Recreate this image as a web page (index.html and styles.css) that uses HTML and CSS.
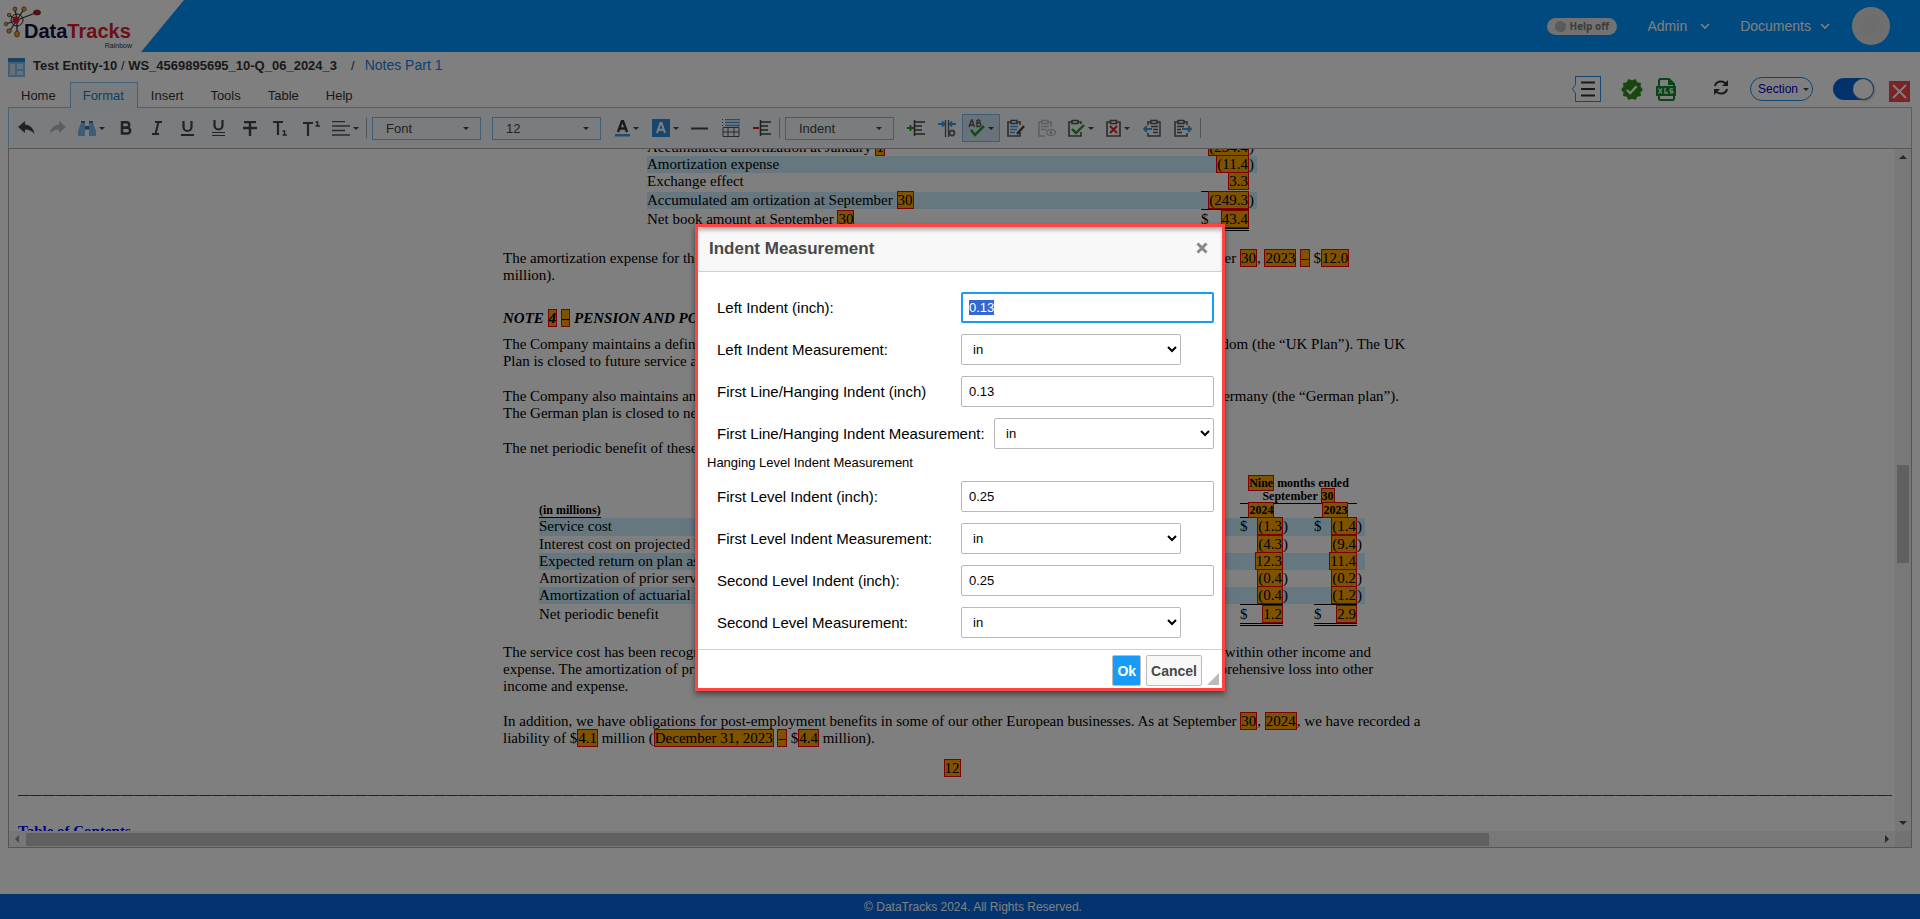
FILE: index.html
```html
<!DOCTYPE html>
<html lang="en">
<head>
    <meta charset="UTF-8">
    <meta name="viewport" content="width=device-width, initial-scale=1.0">
    <title>DataTracks Rainbow</title>
    <link rel="stylesheet" href="styles.css">
    <script src="script.js" defer></script>
</head>
<body>
    <header class="top-bar">
        <div class="logo">
            <svg class="logo-mark" width="40" height="34" viewBox="0 0 40 34">
                <g stroke="#333" stroke-width="1" fill="none">
                    <circle cx="14" cy="15" r="6"/>
                    <path d="M14 15L12 4M14 15L21 4M14 15L6 10M14 15L3 19M14 15L6 27M14 15L14 29M14 15L35 7" stroke-width="1.3"/>
                </g>
                <g fill="#e8a33c" stroke="#5a3a10" stroke-width=".7">
                    <circle cx="12" cy="4" r="2"/><circle cx="21" cy="4" r="2.2"/><circle cx="6" cy="10" r="1.7"/>
                    <circle cx="3" cy="19" r="1.8"/><circle cx="6" cy="26" r="2.2"/><ellipse cx="14" cy="29" rx="2.4" ry="3"/>
                </g>
                <circle cx="13" cy="15" r="3.4" fill="#e0202a"/>
                <ellipse cx="34" cy="7.500" rx="3.600" ry="2.600" fill="#c8102e" stroke="#333" stroke-width=".6"/>
            </svg>
            <div class="logo-text"><span class="logo-data">Data</span><span class="logo-tracks">Tracks</span></div>
            <div class="logo-sub">Rainbow</div>
        </div>
        <nav class="top-nav">
            <button class="help-btn"><span class="dot"></span>Help off</button>
            <button class="nav-btn nav-admin">Admin <svg width="10" height="7" viewBox="0 0 10 7"><path d="M1 1l4 4 4-4" fill="none" stroke="#fff" stroke-width="1.600"/></svg></button>
            <button class="nav-btn">Documents <svg width="10" height="7" viewBox="0 0 10 7"><path d="M1 1l4 4 4-4" fill="none" stroke="#fff" stroke-width="1.600"/></svg></button>
            <span class="avatar"></span>
        </nav>
    </header>

    <div class="sub-bar">
        <div class="sub-left">
            <div class="breadcrumb">
                <svg width="17" height="19" viewBox="0 0 17 19"><path d="M0 0h17v19H0z" fill="#86bfe6"/><path d="M0 0h17v4H0z" fill="#2e86c8"/><path d="M2 6h5v11H2zM9 6h6v5H9zM9 13h6v4H9z" fill="#c9e3f5"/></svg>
                <span class="crumb-main"><b>Test Entity-10</b> / <b>WS_4569895695_10-Q_06_2024_3</b></span>
                <span class="crumb-sep">/</span>
                <a href="#" class="crumb-link">Notes Part 1</a>
            </div>
            <div class="tabs">
                <button class="tab">Home</button>
                <button class="tab active">Format</button>
                <button class="tab">Insert</button>
                <button class="tab">Tools</button>
                <button class="tab">Table</button>
                <button class="tab">Help</button>
            </div>
        </div>
        <div class="sub-right">
            <button class="act act-outline" aria-label="Outline"><svg width="29" height="26" viewBox="0 0 29 26"><path d="M3.500 .5h25v25h-25v-8l-3-4.500 3-4.500z" fill="none" stroke="#2b8fe0"/><path d="M9 6.500h14M9 13h14M9 19.500h14" stroke="#333" stroke-width="2"/></svg></button>
            <button class="act act-valid" aria-label="Validate"><svg width="22" height="23" viewBox="0 0 24 24"><path d="M23 12l-2.400-2.800.3-3.700-3.600-.8-1.900-3.200L12 3 8.600 1.500 6.700 4.700l-3.600.8.3 3.700L1 12l2.400 2.800-.3 3.700 3.600.8 1.900 3.200L12 21l3.400 1.500 1.900-3.200 3.600-.8-.3-3.700z" fill="#2f8f1f" stroke="#2f8f1f" stroke-width="1.500"/><path d="M6.500 12.500l3.500 3.500 7-7.500" fill="none" stroke="#fff" stroke-width="2.400"/></svg></button>
            <button class="act act-xls" aria-label="Export XLS"><svg width="20" height="23" viewBox="0 0 20 23"><path d="M3 9V2.500Q3 1 4.500 1H13l5 5v3M3 17v3.500Q3 22 4.500 22h12q1.500 0 1.500-1.500V17" fill="none" stroke="#128a2c" stroke-width="2"/><path d="M12 1l6 6h-6zM0 8h20v10H0z" fill="#128a2c"/><path d="M2.500 10.500l3.500 5M6 10.500l-3.500 5M9 10v5h3M17 11q-3-1-3 1t1.500 1q1.500 0 1.500 1t-3 1" fill="none" stroke="#fff" stroke-width="1.300"/></svg></button>
            <button class="act act-refresh" aria-label="Refresh"><svg width="16" height="15" viewBox="0 0 16 15"><path d="M2 6a6 5.500 0 0 1 11-2M14 9a6 5.500 0 0 1-11 2" fill="none" stroke="#333" stroke-width="2"/><path d="M15 0v6H9zM1 15V9h6z" fill="#333"/></svg></button>
            <button class="section-btn">Section <i class="caret"></i></button>
            <input type="checkbox" class="switch" aria-label="Edit mode" checked>
            <button class="close-doc" aria-label="Close document"><svg width="21" height="21" viewBox="0 0 21 21"><path d="M4 4l13 13M17 4L4 17" stroke="#fff" stroke-width="1.800"/></svg></button>
        </div>
    </div>

    <main class="editor">
        <div class="toolbar">
            <button class="tool" aria-label="Undo"><svg width="17" height="14" viewBox="0 0 17 14"><path d="M0 6l7-6v3.500Q15 4 16.500 13 13 8.500 7 8.500V12z" fill="#444"/></svg></button>
            <button class="tool" aria-label="Redo"><svg width="17" height="14" viewBox="0 0 17 14"><path d="M17 6l-7-6v3.500Q2 4 .5 13 4 8.500 10 8.500V12z" fill="#bbb"/></svg></button>
            <button class="tool wide" aria-label="Find"><svg width="18" height="15" viewBox="0 0 18 15"><path d="M3 2h4v3h4V2h4l3 8v5h-7V9H7v6H0v-5z" fill="#7db9e8"/><path d="M3 0h4v2H3zM11 0h4v2h-4z" fill="#2779b8"/><path d="M7 5h4v3H7z" fill="#2779b8"/></svg><i class="caret"></i></button>
            <button class="tool" aria-label="Bold"><svg width="12" height="14" viewBox="0 0 12 14"><path d="M2 1.300h4.500a2.600 2.600 0 0 1 0 5.300H2zM2 6.700h5.300a2.900 2.900 0 0 1 0 5.800H2z" fill="none" stroke="#444" stroke-width="2.500"/></svg></button>
            <button class="tool" aria-label="Italic"><svg width="10" height="14" viewBox="0 0 10 14"><path d="M3 1h7M0 13h7M6.500 1l-3 12" fill="none" stroke="#444" stroke-width="2"/></svg></button>
            <button class="tool" aria-label="Underline"><svg width="13" height="15" viewBox="0 0 13 15"><path d="M2.500 0v6a4 4 0 0 0 8 0V0M0 14h13" fill="none" stroke="#444" stroke-width="2.200"/></svg></button>
            <button class="tool" aria-label="Double underline"><svg width="13" height="16" viewBox="0 0 13 16"><path d="M2.500 0v5.500a4 4 0 0 0 8 0V0" fill="none" stroke="#444" stroke-width="2.200"/><path d="M0 12.500h13M0 15.500h13" stroke="#444"/></svg></button>
            <button class="tool" aria-label="Strikethrough"><svg width="14" height="15" viewBox="0 0 14 15"><path d="M1 1h12M7 1v14M0 7h14" fill="none" stroke="#444" stroke-width="2.400"/></svg></button>
            <button class="tool" aria-label="Subscript"><svg width="15" height="15" viewBox="0 0 15 15"><path d="M0 1h10M5 1v13" fill="none" stroke="#444" stroke-width="2.200"/><path d="M9.500 10h2v4M9.500 14h4.500" fill="none" stroke="#444" stroke-width="1.500"/></svg></button>
            <button class="tool" aria-label="Superscript"><svg width="17" height="15" viewBox="0 0 17 15"><path d="M0 2h10M5 2v13" fill="none" stroke="#444" stroke-width="2.200"/><path d="M12.500 1h2v4M12.500 5h4.500" fill="none" stroke="#444" stroke-width="1.500"/></svg></button>
            <button class="tool wide" aria-label="Align"><svg width="18" height="15" viewBox="0 0 18 15"><path d="M0 .5h13M0 5h18M0 9.500h13M0 14h18" stroke="#555" stroke-width="1.500"/></svg><i class="caret"></i></button>
            <span class="sep"></span>
            <span class="combo"><select aria-label="Font"><option>Font</option></select></span>
            <span class="combo combo-size"><select aria-label="Font size"><option>12</option></select></span>
            <button class="tool wide" aria-label="Text colour"><svg width="15" height="17" viewBox="0 0 15 17"><path d="M3 12L7 1h1l4 11M4.500 8.500h6" fill="none" stroke="#333" stroke-width="2.400"/><path d="M0 14h15v2.500H0z" fill="#3c9be8"/></svg><i class="caret"></i></button>
            <button class="tool wide tool-gap" aria-label="Background colour"><svg width="18" height="18" viewBox="0 0 18 18"><path d="M0 0h18v18H0z" fill="#2f8fdf"/><path d="M5 14L8.500 4h1L13 14M6 10.800h6" fill="none" stroke="#fff" stroke-width="2"/></svg><i class="caret"></i></button>
            <button class="tool" aria-label="Line"><svg width="17" height="3" viewBox="0 0 17 3"><path d="M0 1.500h17" stroke="#444" stroke-width="2"/></svg></button>
            <button class="tool" aria-label="Table rows"><svg width="18" height="18" viewBox="0 0 18 18"><path d="M3 .5h15M3 3.500h15M3 6.500h15" stroke="#4a9fe0" stroke-width="1.500"/><path d="M.5 0v8" stroke="#555" stroke-dasharray="1 2"/><path d="M1 8.500h16v9H1zM1 13h16M6 8v9M12 8v9" fill="none" stroke="#555"/></svg></button>
            <button class="tool" aria-label="Remove indent"><svg width="18" height="16" viewBox="0 0 18 16"><path d="M0 8h6" stroke="#e01010" stroke-width="2"/><path d="M7.500 0v16M8 2h10M8 6h7M8 10h7M8 14h10" stroke="#444" stroke-width="1.600"/></svg></button>
            <span class="sep"></span>
            <span class="combo"><select aria-label="Indent"><option>Indent</option></select></span>
            <button class="tool" aria-label="Add indent"><svg width="18" height="16" viewBox="0 0 18 16"><path d="M0 8h7M3.500 5v6" stroke="#12a012" stroke-width="2"/><path d="M7.500 0v16M8 2h10M8 6h7M8 10h7M8 14h10" stroke="#444" stroke-width="1.600"/></svg></button>
            <button class="tool" aria-label="Indent settings"><svg width="18" height="17" viewBox="0 0 18 17"><path d="M0 4h6M18 4h-6M4 1.500L6.500 4 4 6.500M14 1.500L11.500 4 14 6.500" fill="none" stroke="#3c9be8" stroke-width="1.800"/><path d="M7.500 0v17M10.500 0v17" stroke="#555" stroke-width="1.300"/><circle cx="14" cy="13" r="2.500" fill="none" stroke="#666" stroke-width="1.800"/></svg></button>
            <button class="tool tool-on" aria-label="Spell check"><svg width="17" height="18" viewBox="0 0 17 18"><path d="M1 8l2.500-7h.5l2.500 7M2 6h4M9 1v6.500h2a1.500 1.500 0 0 0 0-3.500H9h1.500a1.500 1.500 0 0 0 0-3H9" fill="none" stroke="#555" stroke-width="1.400"/><path d="M3 11l4 5 9-9" fill="none" stroke="#1f9a1f" stroke-width="2.500"/></svg><i class="caret"></i></button>
            <button class="tool" aria-label="Edit notes"><svg width="18" height="18" viewBox="0 0 18 18"><path d="M4 3H1v14h12v-4M10 3h3v3M4 1.500h6v3H4z" fill="none" stroke="#555" stroke-width="1.600"/><path d="M3 7.500h8M3 10.500h7M3 13.500h5" stroke="#3c9be8" stroke-width="1.400"/><path d="M17 7l-7 8" stroke="#444" stroke-width="2.400"/></svg></button>
            <button class="tool" aria-label="View notes"><svg width="18" height="18" viewBox="0 0 18 18"><g opacity=".35"><path d="M4 3H1v14h6M10 3h3v5M4 1.500h6v3H4z" fill="none" stroke="#555" stroke-width="1.600"/><path d="M3 7.500h8M3 10.500h5" stroke="#555" stroke-width="1.400"/><ellipse cx="13" cy="13.500" rx="4.500" ry="3" fill="none" stroke="#555" stroke-width="1.500"/><circle cx="13" cy="13.500" r="1.200"/></g></svg></button>
            <button class="tool wide" aria-label="Accept"><svg width="17" height="18" viewBox="0 0 17 18"><path d="M4 3H1v14h12v-4M10 3h3v2M4 1.500h6v3H4z" fill="none" stroke="#555" stroke-width="1.600"/><path d="M4 10l4 4 8-8" fill="none" stroke="#1f9a1f" stroke-width="2.400"/></svg><i class="caret"></i></button>
            <button class="tool wide" aria-label="Reject"><svg width="15" height="18" viewBox="0 0 15 18"><path d="M4 3H1v14h13V3h-3M4.500 1.500h6v3h-6z" fill="none" stroke="#555" stroke-width="1.600"/><path d="M4 7l7 7M11 7l-7 7" stroke="#e02020" stroke-width="2"/></svg><i class="caret"></i></button>
            <button class="tool" aria-label="Previous note"><svg width="18" height="18" viewBox="0 0 18 18"><path d="M8 3H5v3M5 14v3h12V3h-3M8 1.500h6v3H8zM8 7.500h7M10 10.500h5M10 13.500h5" fill="none" stroke="#555" stroke-width="1.500"/><path d="M9 10H1M4 7l-3 3 3 3" fill="none" stroke="#3c9be8" stroke-width="1.800"/></svg></button>
            <button class="tool" aria-label="Next note"><svg width="18" height="18" viewBox="0 0 18 18"><path d="M4 3H1v14h12v-3M10 3h3v3M4 1.500h6v3H4zM3 7.500h7M3 10.500h4M3 13.500h5" fill="none" stroke="#555" stroke-width="1.500"/><path d="M8 10h9M14 7l3 3-3 3" fill="none" stroke="#3c9be8" stroke-width="1.800"/></svg></button>
            <span class="sep"></span>
        </div>

        <div class="doc-frame">
            <div class="doc">
                <div class="page">
                    <table class="fin fin-small">
                        <colgroup><col><col class="c-cur"><col class="c-val"><col class="c-end"></colgroup>
                        <tr><td>Accumulated amortization at January <mark>1</mark></td><td class="num" colspan="2"><mark>(234.4</mark></td><td>)</td></tr>
                        <tr class="band"><td>Amortization expense</td><td class="num" colspan="2"><mark>(11.4</mark></td><td>)</td></tr>
                        <tr class="tall"><td>Exchange effect</td><td class="num line" colspan="2"><mark>3.3</mark></td><td></td></tr>
                        <tr class="band"><td>Accumulated am ortization at September <mark>30</mark></td><td class="num" colspan="2"><mark>(249.3</mark></td><td>)</td></tr>
                        <tr class="total"><td>Net book amount at September <mark>30</mark></td><td class="over">$</td><td class="num over"><mark>43.4</mark></td><td></td></tr>
                    </table>

                    <p class="after-table">The amortization expense for the nine months ended September <mark>30</mark>, <mark>2024</mark> is $<mark>11.4</mark> million (nine months ended September <mark>30</mark>, <mark>2023</mark> <mark>–</mark> $<mark>12.0</mark> million).</p>
                    <h2>NOTE <mark>4</mark> <mark>–</mark> PENSION AND POST-EMPLOYMENT BENEFITS</h2>
                    <p>The Company maintains a defined benefit pension plan covering both current and former employees in the United Kingdom (the “UK Plan”). The UK Plan is closed to future service accrual.</p>
                    <p>The Company also maintains an unfunded defined benefit pension plan covering the current and former employees in Germany (the “German plan”). The German plan is closed to new entrants.</p>
                    <p>The net periodic benefit of these plans is shown in the following table:</p>

                    <table class="fin fin-wide">
                        <colgroup><col><col class="c-cur"><col class="c-val"><col class="c-gap"><col class="c-cur"><col class="c-val"><col class="c-end"></colgroup>
                        <tr class="head"><th></th><th colspan="5" class="line"><mark>Nine</mark> months ended<br>September <mark>30</mark></th><th></th></tr>
                        <tr class="head years"><th class="unit"><span>(in millions)</span></th><th colspan="2" class="line"><mark>2024</mark></th><th></th><th colspan="2" class="line"><mark>2023</mark></th><th></th></tr>
                        <tr class="band first"><td>Service cost</td><td>$</td><td class="num"><mark>(1.3</mark></td><td>)</td><td>$</td><td class="num"><mark>(1.4</mark></td><td>)</td></tr>
                        <tr><td>Interest cost on projected benefit obligation</td><td></td><td class="num"><mark>(4.3</mark></td><td>)</td><td></td><td class="num"><mark>(9.4</mark></td><td>)</td></tr>
                        <tr class="band"><td>Expected return on plan assets</td><td></td><td class="num"><mark>12.3</mark></td><td></td><td></td><td class="num"><mark>11.4</mark></td><td></td></tr>
                        <tr><td>Amortization of prior service cost</td><td></td><td class="num"><mark>(0.4</mark></td><td>)</td><td></td><td class="num"><mark>(0.2</mark></td><td>)</td></tr>
                        <tr class="band"><td>Amortization of actuarial net losses</td><td></td><td class="num"><mark>(0.4</mark></td><td>)</td><td></td><td class="num"><mark>(1.2</mark></td><td>)</td></tr>
                        <tr class="total"><td>Net periodic benefit</td><td class="over">$</td><td class="num over"><mark>1.2</mark></td><td></td><td class="over">$</td><td class="num over"><mark>2.9</mark></td><td></td></tr>
                    </table>

                    <p>The service cost has been recognized in selling, general and administrative expenses. Other items have been recognized within other income and expense. The amortization of prior service cost or actuarial net losses is a reclassification out of accumulated other comprehensive loss into other income and expense.</p>
                    <p class="last">In addition, we have obligations for post-employment benefits in some of our other European businesses. As at September <mark>30</mark>, <mark>2024</mark>, we have recorded a liability of $<mark>4.1</mark> million (<mark>December 31, 2023</mark> <mark>–</mark> $<mark>4.4</mark> million).</p>
                    <div class="page-no"><mark>12</mark></div>
                </div>
                <hr class="page-break">
                <a href="#" class="toc">Table of Contents</a>
            </div>
            <div class="vbar"><i class="arrow up"></i><span class="vthumb"></span><i class="arrow down"></i></div>
            <div class="hbar"><i class="arrow left"></i><span class="htrack"><span class="hthumb"></span></span><i class="arrow right"></i></div>
            <div class="corner"></div>
        </div>
    </main>

    <footer class="site-footer">© DataTracks 2024. All Rights Reserved.</footer>

    <div class="overlay">
        <form class="dialog" role="dialog" aria-labelledby="dlg-title">
            <div class="dialog-head">
                <h1 id="dlg-title">Indent Measurement</h1>
                <button type="button" class="dialog-close" aria-label="Close"><svg width="12" height="12" viewBox="0 0 12 12"><path d="M1.500 1.500l9 9M10.500 1.500l-9 9" stroke="#888" stroke-width="3"/></svg></button>
            </div>
            <div class="dialog-body">
                <div class="row"><label for="left">Left Indent (inch):</label><input type="text" id="left" value="0.13"></div>
                <div class="row"><label for="left-unit">Left Indent Measurement:</label><select id="left-unit"><option>in</option></select></div>
                <div class="row"><label for="hang">First Line/Hanging Indent (inch)</label><input type="text" id="hang" value="0.13"></div>
                <div class="row"><label for="hang-unit">First Line/Hanging Indent Measurement:</label><select id="hang-unit"><option>in</option></select></div>
                <div class="group-title">Hanging Level Indent Measurement</div>
                <div class="row"><label for="first">First Level Indent (inch):</label><input type="text" id="first" value="0.25"></div>
                <div class="row"><label for="first-unit">First Level Indent Measurement:</label><select id="first-unit"><option>in</option></select></div>
                <div class="row"><label for="second">Second Level Indent (inch):</label><input type="text" id="second" value="0.25"></div>
                <div class="row"><label for="second-unit">Second Level Measurement:</label><select id="second-unit"><option>in</option></select></div>
            </div>
            <div class="dialog-foot">
                <button type="button" class="btn btn-ok">Ok</button>
                <button type="button" class="btn">Cancel</button>
                <i class="grip"></i>
            </div>
        </form>
    </div>
</body>
</html>
```
FILE: styles.css
```css
* {
    box-sizing: border-box;
}

body {
    margin: 0;
    height: 100vh;
    display: flex;
    flex-direction: column;
    overflow: hidden;
    position: relative;
    background: #fff;
    color: #333;
    font-family: "Liberation Sans", Arial, sans-serif;
    font-size: 13px;
}

button {
    border: 0;
    padding: 0;
    background: none;
    color: inherit;
    font: inherit;
}

svg {
    display: block;
}

/* header */
.top-bar {
    flex: none;
    display: flex;
    justify-content: space-between;
    height: 52px;
    background: #0094ff;
}

.logo {
    position: relative;
    width: 184px;
    padding: 20px 0 0 24px;
    background: #fff;
    clip-path: polygon(0 0, 100% 0, 141px 100%, 0 100%);
}

.logo-mark {
    position: absolute;
    top: 5px;
    left: 3px;
}

.logo-text {
    position: relative;
    font-size: 20px;
    font-weight: bold;
    line-height: 22px;
}

.logo-data {
    color: #14103c;
}

.logo-tracks {
    color: #d81e2c;
}

.logo-sub {
    width: 108px;
    font-size: 7px;
    line-height: 7px;
    text-align: right;
}

.top-nav {
    display: flex;
    align-items: center;
    padding-right: 30px;
    color: #fff;
    font-size: 14px;
}

.help-btn {
    display: flex;
    align-items: center;
    gap: 4px;
    width: 70px;
    height: 17px;
    margin-right: 31px;
    padding-left: 8px;
    border-radius: 9px;
    background: #e4e4e4;
    color: #777;
    font-family: "Open Sans", sans-serif;
    font-size: 10px;
    font-weight: bold;
    line-height: 17px;
}

.dot {
    width: 11px;
    height: 11px;
    border-radius: 50%;
    background: #b4b4b4;
}

.nav-btn {
    display: flex;
    align-items: center;
    gap: 9px;
    margin-right: 22px;
}

.nav-admin {
    gap: 13px;
    margin-right: 30px;
}

.avatar {
    width: 38px;
    height: 38px;
    border-radius: 50%;
    background: radial-gradient(circle, #d8d8d8, #e4e4e4);
}

/* breadcrumb and tabs */
.sub-bar {
    flex: none;
    display: flex;
    justify-content: space-between;
    height: 55px;
    padding: 0 10px 0 8px;
}

.breadcrumb {
    display: flex;
    align-items: center;
    height: 26px;
    margin-bottom: 4px;
}

.breadcrumb svg {
    margin-top: 4px;
}

.crumb-main {
    margin-left: 8px;
}

.crumb-sep {
    margin: 0 10px 0 14px;
}

.crumb-link {
    color: #1a7fe0;
    font-size: 14px;
    text-decoration: none;
}

.tabs {
    display: flex;
}

.tab {
    height: 26px;
    padding: 0 13px 0 12px;
    border: 1px solid transparent;
}

.tab.active {
    position: relative;
    border-color: #88c2ee;
    border-bottom: 0;
    background: #f2f8fe;
    color: #1a7fc8;
}

.sub-right {
    display: flex;
    align-items: center;
    padding-top: 19px;
}

.act-outline {
    margin-right: 20px;
}

.act-valid {
    margin-right: 13px;
}

.act-xls {
    margin-right: 37px;
}

.act-refresh {
    margin: 0 21px 4px 0;
}

.section-btn {
    display: flex;
    align-items: center;
    justify-content: space-between;
    width: 63px;
    height: 24px;
    margin-right: 20px;
    padding: 0 3px 0 7px;
    border: 1px solid #1a8ae6;
    border-radius: 12px;
    color: #00c;
    font-size: 12px;
}

.switch {
    appearance: none;
    width: 41px;
    height: 22px;
    margin: 0 15px 0 0;
    border-radius: 11px;
    background: #0565d8;
}

.switch::before {
    content: "";
    display: block;
    width: 20px;
    height: 20px;
    margin: 1px 0 0 20px;
    border-radius: 50%;
    background: #fff;
    box-shadow: 1px 1px 3px #888;
}

.close-doc {
    margin-top: 4px;
    background: #f04a4a;
}

/* toolbar */
.editor {
    flex: 1;
    min-height: 0;
    display: flex;
    flex-direction: column;
    margin: 0 8px 46px;
}

.toolbar {
    flex: none;
    display: flex;
    align-items: center;
    height: 41px;
    padding-left: 2px;
    border: 1px solid #8fc6f0;
    border-bottom: 0;
    background: #f5f9fd;
}

.tool {
    flex: none;
    display: flex;
    align-items: center;
    justify-content: center;
    gap: 3px;
    width: 31px;
    height: 28px;
}

.tool.wide {
    width: 37px;
}

.tool-gap {
    margin-left: 2px;
}

.tool-on {
    width: 38px;
    border: 1px solid #7fbdec;
    background: #cfe4f4;
}

.caret {
    width: 0;
    border: 3px solid transparent;
    border-top: 3px solid #444;
    border-bottom: 0;
}

.sep {
    flex: none;
    width: 1px;
    height: 20px;
    margin: 0 5px 0 2px;
    background: #aaa;
}

.combo {
    flex: none;
    position: relative;
    width: 109px;
    height: 23px;
    margin-right: 6px;
}

.combo-size {
    margin: 0 7px 0 5px;
}

.combo select {
    appearance: none;
    width: 100%;
    height: 23px;
    padding: 0 13px;
    border: 1px solid #7fbdec;
    border-radius: 0;
    background: #f5f9fd;
    color: #444;
    font: 13px "Liberation Sans", Arial, sans-serif;
}

.combo::after {
    content: "";
    position: absolute;
    top: 10px;
    right: 12px;
    border: 3px solid transparent;
    border-top-color: #444;
    border-bottom: 0;
}

/* document */
.doc-frame {
    flex: 1;
    min-height: 0;
    display: grid;
    grid-template: 1fr 16px / 1fr 16px;
    border: 1px solid #aaa;
}

.doc {
    min-height: 0;
    overflow: hidden;
    color: #000;
    font-family: "Liberation Serif", "Times New Roman", serif;
    font-size: 15px;
    line-height: 17px;
}

.page {
    width: 898px;
    margin: -10px auto 0;
}

.page p,
.page h2 {
    margin: 0 -8px 18px 0;
}

.page .after-table {
    margin: 19px 0 26px;
}

.page .last {
    margin-right: -20px;
}

.page h2 {
    margin-bottom: 9px;
    font-size: 15px;
    font-style: italic;
}

mark {
    border: 1px solid #f00;
    background: #ffa500;
    color: inherit;
}

.fin {
    table-layout: fixed;
    border-spacing: 0;
    margin: 0 auto;
}

.fin-small {
    width: 610px;
}

.fin-wide {
    width: 826px;
    margin: 20px auto 18px;
}

.fin td,
.fin th {
    height: 17px;
    padding: 0;
    vertical-align: top;
    white-space: nowrap;
}

.fin .num {
    text-align: right;
}

.c-cur {
    width: 13px;
}

.c-val {
    width: 30px;
}

.fin-small .c-val {
    width: 35px;
}

.c-gap {
    width: 31px;
}

.c-end {
    width: 8px;
}

.band {
    background: #cceeff;
}

.fin .tall td {
    height: 19px;
}

.fin .first td {
    height: 18px;
}

.fin .line {
    border-bottom: 1px solid #000;
}

.fin .total td {
    height: 22px;
    padding-top: 2px;
}

.fin .total .over {
    padding-top: 1px;
    border-top: 1px solid #000;
    border-bottom: 3px double #000;
}

.fin .head th {
    font-size: 12px;
    line-height: 13px;
}

.fin .years th {
    height: 14px;
}

.fin .unit {
    text-align: left;
}

.unit span {
    border-bottom: 1px solid #000;
}

.page-no {
    margin-top: -5px;
    text-align: center;
}

.page-break {
    height: 1px;
    margin: 18px 3px 27px 9px;
    border: 0;
    background: repeating-linear-gradient(90deg, #e00000 0 10px, #666 10px 13px);
}

.toc {
    margin-left: 9px;
    color: #00f;
    font-weight: bold;
}

/* scrollbars */
.vbar,
.hbar {
    display: flex;
    align-items: center;
    background: #f1f1f1;
}

.vbar {
    flex-direction: column;
    padding: 6px 0;
}

.hbar {
    padding: 0 6px;
}

.vthumb {
    width: 12px;
    height: 98px;
    margin: 306px 0 auto;
    background: #c1c1c1;
}

.htrack {
    flex: 1;
    padding: 0 7px;
}

.hthumb {
    display: block;
    width: 79%;
    height: 13px;
    background: #c1c1c1;
}

.arrow {
    border: 4px solid transparent;
}

.up {
    border-top: 0;
    border-bottom-color: #505050;
}

.down {
    border-bottom: 0;
    border-top-color: #505050;
}

.left {
    border-left: 0;
    border-right-color: #909090;
}

.right {
    border-right: 0;
    border-left-color: #505050;
}

.corner {
    background: #e4e4e4;
}

.site-footer {
    flex: none;
    height: 25px;
    padding-left: 26px;
    background: #0668de;
    color: #fff;
    font-size: 12px;
    line-height: 26px;
    text-align: center;
}

/* dialog */
.overlay {
    position: absolute;
    inset: 0;
    display: flex;
    align-items: center;
    justify-content: center;
    padding-bottom: 4px;
    background: rgba(0, 0, 0, 0.5);
}

.dialog {
    width: 530px;
    border: 3px solid #ff4444;
    background: #fff;
    box-shadow: 0 3px 6px rgba(0, 0, 0, 0.5);
    color: #000;
}

.dialog-head {
    display: flex;
    justify-content: space-between;
    height: 45px;
    padding: 13px 14px 0 11px;
    border-bottom: 1px solid #cfcfcf;
    background: #f8f8f8;
    box-shadow: inset 0 4px 4px -1px rgba(0, 0, 0, 0.3);
}

.dialog-head h1 {
    margin: 0;
    color: #484848;
    font-size: 17px;
    line-height: 18px;
}

.dialog-close {
    align-self: flex-start;
    margin-top: 2px;
}

.dialog-body {
    padding: 20px 8px 11px 9px;
}

.row {
    display: flex;
    align-items: center;
    height: 31px;
    margin-bottom: 11px;
    padding-left: 10px;
}

.row:last-child {
    margin-bottom: 0;
}

.row label {
    min-width: 244px;
    flex: none;
    font-size: 15px;
}

.row input,
.row select {
    height: 31px;
    border: 1px solid #b8b8b8;
    border-radius: 2px;
    background: #fff;
    color: #000;
    font: 13px "Liberation Sans", Arial, sans-serif;
}

.row input {
    width: 253px;
    padding: 0 7px;
}

.row select {
    width: 220px;
    padding: 0 7px;
}

#hang-unit {
    margin-left: auto;
}

.row input:focus {
    padding: 0 6px;
    border: 2px solid #179bf5;
    outline: 0;
}

.row input::selection {
    background: #3367d1;
    color: #fff;
}

.group-title {
    height: 32px;
    margin-top: -11px;
    line-height: 27px;
}

.dialog-foot {
    position: relative;
    display: flex;
    justify-content: flex-end;
    gap: 5px;
    height: 39px;
    padding: 5px 20px 0 0;
    border-top: 1px solid #cfcfcf;
}

.btn {
    height: 31px;
    padding: 0 4px;
    border: 1px solid #bcbcbc;
    border-radius: 2px;
    background: #f8f8f8;
    color: #484848;
    font-size: 14px;
    font-weight: bold;
}

.btn-ok {
    background: #179bf8;
    color: #fff;
}

.grip {
    position: absolute;
    right: 3px;
    bottom: 3px;
    border: 6px solid #bbb;
    border-top-color: transparent;
    border-left-color: transparent;
}
```
FILE: script.js
```js
const leftIndent = document.getElementById('left');
leftIndent.focus();
leftIndent.select();
```
